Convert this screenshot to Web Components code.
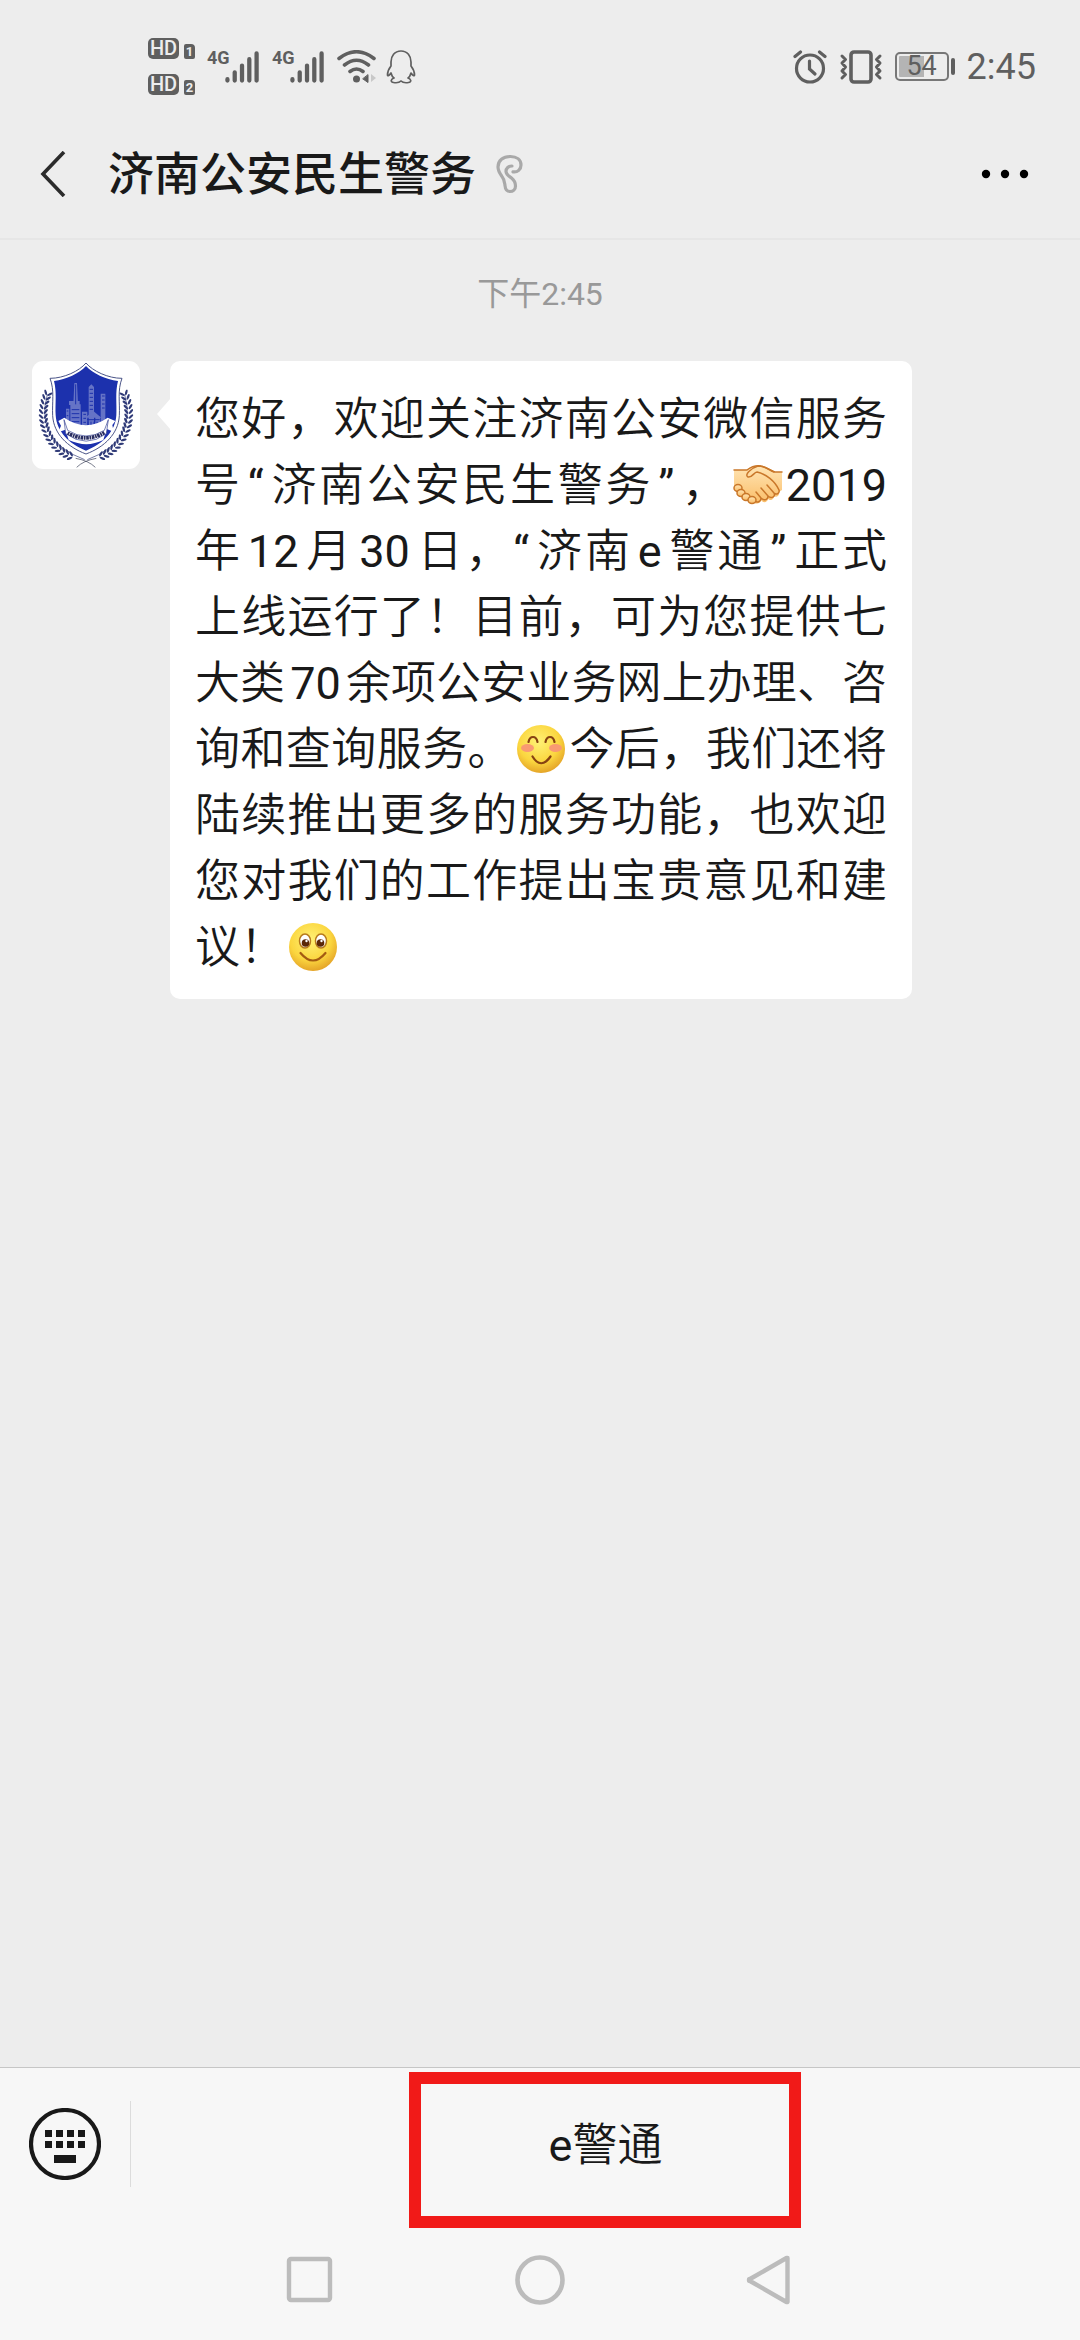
<!DOCTYPE html>
<html lang="zh-CN">
<head>
<meta charset="utf-8">
<meta name="viewport" content="width=device-width, initial-scale=1">
<title>济南公安民生警务</title>
<style>
    html, body { margin: 0; height: 100%; }
    body {
        background: #ededed;
        color: #191919;
        font-family: Roboto, "Noto Sans CJK SC", sans-serif;
    }
</style>
</head>
<body>
<chat-page>
    <status-bar slot="top" time="2:45" battery="54"></status-bar>
    <chat-header slot="top">济南公安民生警务</chat-header>
    <chat-time>下午2:45</chat-time>
    <chat-message>您好，欢迎关注济南公安微信服务号<half-text>“</half-text>济南公安民生警务<half-text>”</half-text>，<chat-emoji name="shake"></chat-emoji><half-text side="none">2019</half-text>年<half-text>12</half-text>月<half-text>30</half-text>日，<half-text side="right">“</half-text>济南<half-text>e</half-text>警通<half-text>”</half-text>正式上线运行了！目前，可为您提供七大类<half-text>70</half-text>余项公安业务网上办理、咨询和查询服务。<chat-emoji name="blush"></chat-emoji>今后，我们还将陆续推出更多的服务功能，也欢迎您对我们的工作提出宝贵意见和建议！<chat-emoji name="smile"></chat-emoji></chat-message>
    <menu-bar slot="bottom"><half-text side="none">e</half-text>警通</menu-bar>
    <system-nav slot="bottom"></system-nav>
</chat-page>

<script>
(function() {
    "use strict";

    // Registers an element whose shadow root is just the given markup.
    function define(name, html) {
        const template = document.createElement('template');
        template.innerHTML = html.trim().replace(/>\s+</g, '><'); // Stray spaces would show between inline parts.
        window.customElements.define(name, class extends HTMLElement {
            constructor() {
                super();
                this.attachShadow({mode: 'open'}).appendChild(template.content.cloneNode(true));
            }
        });
    }

    define('chat-page', `
        <style>
            :host { display: flex; flex-direction: column; min-height: 100vh; }
            main { flex: 1; }
        </style>
        <slot name="top"></slot>
        <main><slot></slot></main>
        <slot name="bottom"></slot>
    `);

    const signal = `
        <svg width="36" height="34" viewBox="0 0 36 34" stroke="#5f5f5f" stroke-width="4.4" stroke-linecap="round">
            <path d="M2.5 29.5v1.5M10 22.5v8.5M17.5 15.5v15.5M25 9v22M32.5 3v28"/>
        </svg>
    `;

    class StatusBar extends HTMLElement {

        constructor() {
            super();
            this.attachShadow({mode: 'open'}).innerHTML = `
                <style>
                    :host {
                        display: flex;
                        justify-content: space-between;
                        align-items: center;
                        height: 81px;
                        padding: 26px 44px 0 148px;
                        color: #5f5f5f;
                    }
                    div { display: flex; align-items: center; }
                    svg { display: block; fill: none; }
                    .hd { flex-direction: column; gap: 15px; }
                    .hd div { gap: 5px; align-items: flex-end; }
                    b {
                        width: 31px;
                        border-radius: 5px;
                        background: #5f5f5f;
                        color: #ededed;
                        font: 500 20px/21px Roboto, sans-serif;
                        text-align: center;
                    }
                    .sim {
                        width: 11px;
                        border-radius: 2px 4px 2px 2px;
                        font: 700 13px/15px Roboto, sans-serif;
                    }
                    .net { align-items: flex-start; width: 53px; justify-content: space-between; }
                    .net span {
                        width: 18px;
                        font: 700 18px/16px "Liberation Sans Narrow", Roboto, sans-serif;
                        white-space: nowrap;
                    }
                    .left { gap: 12px; }
                    .right { gap: 12px; }
                    .net + svg { margin-right: -3px; }
                    .cell {
                        justify-content: center;
                        box-sizing: border-box;
                        width: 54px;
                        height: 29px;
                        border: 2px solid #777;
                        border-radius: 5px;
                        background: linear-gradient(90deg, #b4b4b4 54%, transparent 54%) content-box;
                        padding: 2px;
                        font-size: 27px;
                        line-height: 29px;
                    }
                    .battery { gap: 2px; }
                    .battery i { width: 4px; height: 17px; border-radius: 2px; background: #5f5f5f; }
                    .time { font-size: 36px; line-height: 42px; }
                </style>
                <div class="left">
                    <div class="hd">
                        <div><b>HD</b><b class="sim">1</b></div>
                        <div><b>HD</b><b class="sim">2</b></div>
                    </div>
                    <div class="net"><span>4G</span>${signal}</div>
                    <div class="net"><span>4G</span>${signal}</div>
                    <svg width="40" height="34" viewBox="0 0 40 34" stroke="#5f5f5f" stroke-width="3.6" stroke-linecap="round">
                        <path d="M2 8.5Q19.5-5 37 8.5M7.5 15Q19.5 5.5 31.5 15M13 21.5Q19.5 16.5 26 21.5"/>
                        <circle cx="19.5" cy="29" r="3.5" fill="#5f5f5f" stroke="none"/>
                        <path d="M31 25v7.5l-5-3.5z" fill="#5f5f5f" stroke-width="1"/>
                        <path d="M34 24v8l5-4z" fill="#c8c8c8" stroke="none"/>
                    </svg>
                    <svg width="30" height="34" viewBox="0 0 30 34" stroke="#5f5f5f" stroke-width="1.7" stroke-linejoin="round">
                        <path d="M15 1C8.5 1 5 6 5 12v4C3 18.5 1.5 22 1.5 25c0 1.5 2 .5 3.5-2 .5 2 1.5 4 3 5-3 1-4 4-.5 4.5 3 .5 6 0 7.5-1.5 1.5 1.5 4.5 2 7.5 1.5 3.5-.5 2.5-3.5-.5-4.5 1.5-1 2.5-3 3-5 1.5 2.5 3.5 3.5 3.5 2 0-3-1.5-6.5-3.5-9v-4C25 6 21.5 1 15 1z"/>
                    </svg>
                </div>
                <div class="right">
                    <svg width="34" height="34" viewBox="0 0 34 34" stroke="#5f5f5f" stroke-width="3.2" stroke-linecap="round">
                        <circle cx="17" cy="18.5" r="13.5"/>
                        <path d="M2 6.5 7.5 2M32 6.5 26.5 2"/>
                        <path d="M16.5 11v8l5.5 5"/>
                    </svg>
                    <svg width="44" height="34" viewBox="0 0 44 34" stroke="#5f5f5f" stroke-width="3" stroke-linejoin="round" stroke-linecap="round">
                        <rect x="12" y="2" width="20" height="30" rx="3" stroke-width="3.6"/>
                        <path d="M3 6l3.5 3.5L3 13l3.5 4L3 21l3.5 3.5L3 28M41 6l-3.5 3.5L41 13l-3.5 4 3.5 4-3.5 3.5L41 28"/>
                    </svg>
                    <div class="battery"><div class="cell">${this.getAttribute('battery')}</div><i></i></div>
                    <span class="time">${this.getAttribute('time')}</span>
                </div>
            `;
        }

    }

    window.customElements.define('status-bar', StatusBar);

    define('chat-header', `
        <style>
            :host {
                display: flex;
                align-items: center;
                box-sizing: border-box;
                height: 133px;
                padding: 2px 43px 0 24px;
                border-bottom: 2px solid #e6e6e6;
            }
            button { display: flex; border: 0; padding: 0; background: none; color: inherit; }
            .back { width: 84px; padding: 16px; box-sizing: border-box; }
            h1 { margin: 0; font-size: 46px; line-height: 60px; font-weight: 500; }
            .ear { margin-left: 20px; }
            .more { margin-left: auto; padding: 16px 12px; }
            .more svg { overflow: visible; }
        </style>
        <button class="back" aria-label="返回">
            <svg width="26" height="46" viewBox="0 0 26 46" fill="none" stroke="#2b2b2b" stroke-width="3.6"><path d="M24 1 3 23l21 22"/></svg>
        </button>
        <h1><slot></slot></h1>
        <svg class="ear" width="30" height="42" viewBox="0 0 30 42" fill="none" stroke="#a9a9a9" stroke-width="3.2" stroke-linecap="round" stroke-linejoin="round">
            <path d="M17 18.8C21.5 19.5 25 16.5 25 12 25 6.5 20.5 3.5 14.5 3.5 7 3.5 2 7.5 2 14c0 4 1.5 6 4 9.5 2.5 3 2.5 5 3 9 .3 4 2 6 5 6s5.5-2 5.5-5.5c0-3.5-1.5-6-4-8-3-2-5.5-3.5-5.5-6.5 0-3.2 2.5-5.5 6-5.5"/>
        </svg>
        <button class="more" aria-label="更多">
            <svg width="48" height="10" viewBox="0 0 48 10"><circle cx="9" cy="5" r="4.2"/><circle cx="28" cy="5" r="4.2"/><circle cx="47" cy="5" r="4.2"/></svg>
        </button>
    `);

    define('chat-time', `
        <style>
            :host {
                display: block;
                padding: 34px 0 47px;
                color: #999;
                font-size: 32px;
                line-height: 40px;
                text-align: center;
            }
        </style>
        <slot></slot>
    `);

    // Latin digits, letters and quotes: regular weight, and a little air next to Chinese text.
    define('half-text', `
        <style>
            :host { margin: 0 5px; font-weight: 400; }
            :host([side="right"]) { margin-left: 0; }
            :host([side="none"]) { margin: 0; }
        </style>
        <slot></slot>
    `);

    define('chat-message', `
        <style>
            :host { display: flex; align-items: flex-start; gap: 30px; padding: 0 168px 0 32px; }
            .bubble {
                position: relative;
                flex: 1;
                padding: 26px 25px 18px;
                border-radius: 10px;
                background: #fff;
                font-size: 45px;
                font-weight: 350;
                line-height: 66px;
                text-align: justify;
            }
            .bubble::before {
                content: "";
                position: absolute;
                left: -13px;
                top: 37px;
                border: solid transparent;
                border-width: 16px 14px 16px 0;
                border-right-color: #fff;
            }
        </style>
        <user-avatar></user-avatar>
        <div class="bubble"><slot></slot></div>
    `);

    class UserAvatar extends HTMLElement {

        constructor() {
            super();
            this.attachShadow({mode: 'open'}).innerHTML = `
                <style>
                    :host { display: block; width: 108px; height: 108px; border-radius: 11px; background: #fff; overflow: hidden; }
                    svg { display: block; }
                </style>
                <svg width="108" height="108" viewBox="0 0 324 324" fill="none">
                    <g>${this.branch()}</g>
                    <g transform="translate(324 0) scale(-1 1)">${this.branch()}</g>
                    <path d="M162 6C142 30 96 52 54 52c14 36 6 72 8 112 3 54 44 94 100 115 56-21 97-61 100-115 2-40-6-76 8-112-42 0-88-22-108-46z" fill="#fff" stroke="#4a5487" stroke-width="3"/>
                    <path d="M162 15C142 37 103 56 66 60c9 34 3 68 5 103 3 49 40 86 91 106 51-20 88-57 91-106 2-35-4-69 5-103-37-4-76-23-96-45z" fill="#1c31ad"/>
                    <g fill="#6573c6">
                        <path d="M102 205v-62h10v62zM115 205v-75h9l3-64h8l3 64h8v75zM150 205v-53h16v53zM170 205V78l8-8 8 8v127zM190 205v-38h14v38zM206 205V98h14v107z"/>
                        <path d="M111 120h32v12h-32zM160 170h48l-24-20z"/>
                    </g>
                    <path d="M104 150h5m-5 14h5m-5 14h5M119 146h23m-23 12h23m-23 12h23m-23 12h23M131 70v60M154 160h8m-8 12h8m-8 12h8M173 85h10m-10 12h10m-10 12h10m-10 12h10m-10 12h10m-10 12h10M210 105h8m-8 12h8m-8 12h8m-8 12h8M165 176h38m-35 6v20m9-20v20m9-20v20m9-20v20" stroke="#1c31ad" stroke-width="3"/>
                    <path d="M79 180l18-10q65 45 130 0l23 10-9 12 4 20-21-8-10 33q-50 25-104 0l-10-31-21 8 8-20z" fill="#fff"/>
                    <path d="M96 176l11 32q55 34 110 0l12-32-6 42q-60 45-122 0z" fill="#fff" stroke="#303e91" stroke-width="2"/>
                    <path d="M107 216q55 30 110-1" stroke="#292d61" stroke-width="11" stroke-dasharray="5 2 8 2"/>
                    <path d="M134 319q20-20 59-27M190 319q-20-20-59-27" stroke="#343a52" stroke-width="2"/>
                </svg>
            `;
        }

        // Left half of the laurel: leaf pairs along an arc round the shield.
        branch() {
            const leaves = [];
            for (let i = 0; i < 17; i++) {
                const deg = 205 - i * 6;
                const a = deg * Math.PI / 180;
                const x = 160 + 126 * Math.cos(a);
                const y = 158 + 136 * Math.sin(a);
                leaves.push(`<g transform="translate(${x.toFixed(1)} ${y.toFixed(1)}) rotate(${deg - 180})">
                    <ellipse cx="-7" cy="-4" rx="9" ry="3.5" transform="rotate(50 -7 -4)"/>
                    <ellipse cx="7" cy="-4" rx="9" ry="3.5" transform="rotate(-50 7 -4)"/></g>`);
            }
            return `<g fill="#303b78">${leaves.join('')}</g>
                <path d="M46 100Q8 240 158 296" stroke="#303b78" stroke-width="2"/>`;
        }

    }

    window.customElements.define('user-avatar', UserAvatar);

    const face = `
        <defs><radialGradient id="skin" cx=".45" cy=".35" r=".65">
            <stop offset="0" stop-color="#fff176"/><stop offset=".65" stop-color="#fbd63f"/><stop offset="1" stop-color="#e5a528"/>
        </radialGradient></defs>
        <circle cx="25" cy="24" r="24" fill="url(#skin)"/>
    `;

    const emojis = {
        smile: face + `
            <g fill="#fff" stroke="#b87a1c" stroke-width="1.5"><ellipse cx="17" cy="18" rx="5.5" ry="7"/><ellipse cx="33" cy="18" rx="5.5" ry="7"/></g>
            <circle cx="17.5" cy="20" r="3.8" fill="#5b2708"/><circle cx="32.5" cy="20" r="3.8" fill="#5b2708"/>
            <circle cx="18.5" cy="18" r="1.2" fill="#fff"/><circle cx="33.5" cy="18" r="1.2" fill="#fff"/>
            <path d="M12.5 30Q25 45 37.5 30" stroke="#a45b12" stroke-width="2.2"/>`,
        blush: face + `
            <ellipse cx="11.5" cy="23" rx="6.5" ry="4" fill="#f99a72"/><ellipse cx="39.5" cy="23" rx="6.5" ry="4" fill="#f99a72"/>
            <path d="M12.5 17q1-5 4.5-5t4.5 5M29.5 17q1-5 4.5-5t4.5 5M16.5 31.5q8.5 13.5 18 0" stroke="#874212" stroke-width="2.2"/>`,
        shake: `
            <defs><linearGradient id="hand" x2="0" y2="1">
                <stop offset="0" stop-color="#ffe5b4"/><stop offset="1" stop-color="#fabd68"/>
            </linearGradient></defs>
            <g fill="url(#hand)" stroke="#c9772a" stroke-width="1.5">
                <path d="M1 9h12c4-3 9-5 14-4 7 0 11 4 15 6h7v18l-3 2c1 4-3 6-5 4 0 4-4 5-6 3-1 4-5 4-7 1-1 4-4 4-7 3L7 30 1 27z" stroke="none"/>
                <path d="M1 9h13c4-3 9-5 14-4 6 1 10 5 14 6h7" fill="none"/>
                <path d="M24 11c-3 0-5 6-9 5-4-2 3-9 10-11 7 0 11 4 16 6M24 11c9 2 18 9 22 18 1 4-3 5-5 3l-7-8M41 32c2 4-3 6-6 3l-7-8M35 35c0 4-4 5-7 2l-5-6M28 37c0 4-4 5-6 3" fill="none"/>
                <ellipse cx="5" cy="27" rx="4" ry="3.5"/><ellipse cx="8" cy="32" rx="4" ry="3.5"/><ellipse cx="13" cy="36" rx="4" ry="3.5"/><ellipse cx="19" cy="39" rx="4" ry="3.5"/>
            </g>`
    };

    class ChatEmoji extends HTMLElement {

        connectedCallback() {
            if (this.shadowRoot) {
                return;
            }
            this.attachShadow({mode: 'open'}).innerHTML = `
                <style>
                    :host { display: inline-block; width: 50px; height: 48px; margin: 0 3px; vertical-align: -8px; }
                    svg { display: block; }
                </style>
                <svg width="50" height="48" viewBox="0 0 50 48" fill="none" stroke-linecap="round">${emojis[this.getAttribute('name')]}</svg>
            `;
        }

    }

    window.customElements.define('chat-emoji', ChatEmoji);

    define('menu-bar', `
        <style>
            :host {
                display: flex;
                align-items: center;
                height: 151px;
                border-top: 1px solid #c6c6c6;
                background: #f7f7f7;
            }
            button { border: 0; padding: 0; background: none; color: inherit; font: inherit; }
            .keys {
                display: flex;
                justify-content: center;
                box-sizing: border-box;
                width: 131px;
                padding: 7px 0;
                border-right: 1px solid #dcdcdc;
            }
            .item {
                position: relative;
                flex: 1;
                align-self: stretch;
                padding-top: 4px;
                font-size: 45px;
                font-weight: 350;
                line-height: 60px;
            }
            /* red marker frame over the menu entry */
            .item::after {
                content: "";
                position: absolute;
                inset: 4px auto auto 50%;
                box-sizing: border-box;
                width: 392px;
                height: 156px;
                margin-left: -197px;
                border: 12px solid #f11a18;
            }
        </style>
        <button class="keys" aria-label="键盘">
            <svg width="72" height="72" viewBox="0 0 72 72" fill="#191919">
                <circle cx="36" cy="36" r="34" fill="none" stroke="#191919" stroke-width="4.2"/>
                <path d="M16 22h7v7h-7zM27 22h7v7h-7zM38 22h7v7h-7zM49 22h7v7h-7zM16 33h7v7h-7zM27 33h7v7h-7zM38 33h7v7h-7zM49 33h7v7h-7zM25 47h22v8H25z"/>
            </svg>
        </button>
        <button class="item"><slot></slot></button>
    `);

    define('system-nav', `
        <style>
            :host {
                display: flex;
                justify-content: center;
                align-items: center;
                gap: 178px;
                height: 121px;
                background: #f7f7f7;
            }
            button { border: 0; padding: 0; background: none; }
            svg { display: block; }
        </style>
        <button aria-label="最近任务"><svg width="52" height="52" viewBox="0 0 52 52" fill="none" stroke="#bcbcbc" stroke-width="4.4"><rect x="5" y="5" width="41" height="41" rx="2"/></svg></button>
        <button aria-label="主屏幕"><svg width="52" height="52" viewBox="0 0 52 52" fill="none" stroke="#bcbcbc" stroke-width="4.6"><circle cx="26" cy="26" r="22.5"/></svg></button>
        <button aria-label="返回"><svg width="52" height="52" viewBox="0 0 52 52" fill="none" stroke="#bcbcbc" stroke-width="4.4" stroke-linejoin="round"><path d="M43.5 4v44a1 1 0 0 1-1 0L6 27a1 1 0 0 1 0-2L42.5 4z"/></svg></button>
    `);
})();
</script>
</body>
</html>
